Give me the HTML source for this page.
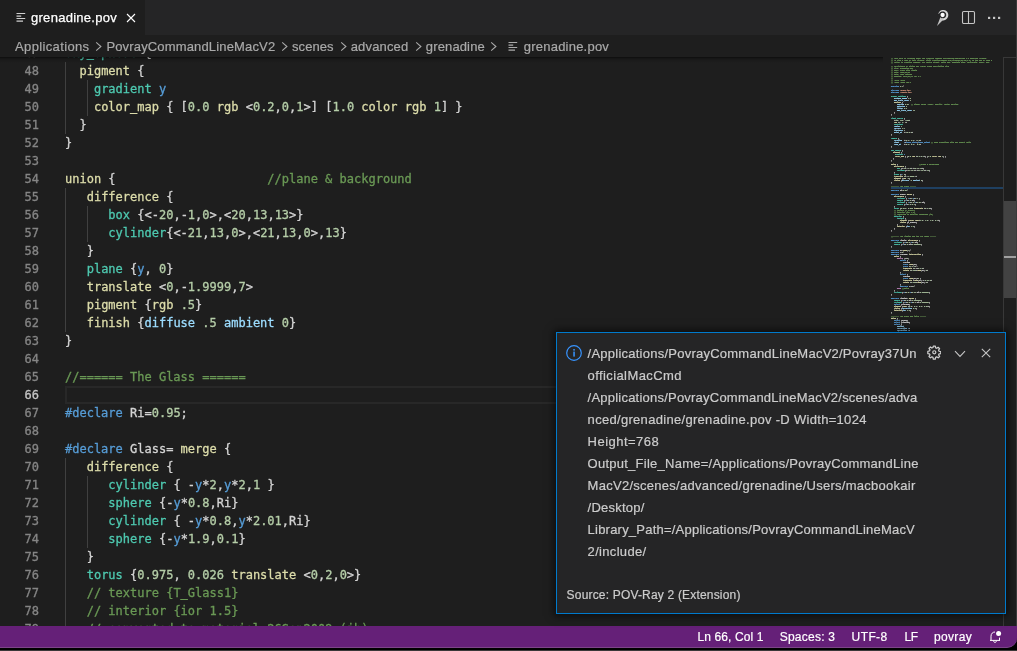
<!DOCTYPE html>
<html lang="en">
<head>
<meta charset="utf-8">
<title>grenadine.pov</title>
<style>
*{box-sizing:border-box;margin:0;padding:0}
html,body{width:1017px;height:651px;overflow:hidden;background:#1e1e1e}
body{position:relative;font-family:"Liberation Sans",sans-serif;font-size:13px;color:#ccc}
.abs{position:absolute}
#root{left:0;top:0;width:1017px;height:651px;overflow:hidden;will-change:transform}
#tabs{left:0;top:0;width:1017px;height:35px;background:#252526}
#tab{left:0;top:0;width:145px;height:35px;background:#1e1e1e}
#tab .lbl{-webkit-text-stroke:.25px;left:31px;top:9px;font-size:13px;line-height:17px;white-space:nowrap;color:#fff;letter-spacing:.28px}
#crumbs{left:0;top:35px;width:1017px;height:22px;background:#1e1e1e;color:#a9a9a9;z-index:5}
#shadow{left:0;top:57px;width:883px;height:6px;z-index:6;background:linear-gradient(rgba(0,0,0,.55),rgba(0,0,0,.28) 1.5px,rgba(0,0,0,.12) 3px,rgba(0,0,0,0) 6px)}
#crumbs span{-webkit-text-stroke:.2px;position:absolute;top:4px;line-height:16px;white-space:nowrap;font-size:13px}
#crumbs svg{position:absolute;top:6px}
#editor{left:0;top:57px;width:1017px;height:569px;overflow:hidden;background:#1e1e1e}
#lines{left:0;top:-13px;width:890px}
.ln{-webkit-text-stroke:.3px;position:absolute;left:0;width:890px;height:18px;line-height:18px;font-family:"DejaVu Sans Mono","Liberation Mono",monospace;font-size:12px;white-space:pre;color:#d4d4d4}
.ln i{position:absolute;left:0;width:39px;text-align:right;color:#858585;font-style:normal}
.ln b{position:absolute;left:65px;font-weight:normal}
.ln.cur i{color:#c6c6c6}
.g{position:absolute;width:1px;background:#404040}
.f{color:#dcdcaa}.t{color:#4ec9b0}.k{color:#569cd6}.v{color:#9cdcfe}.n{color:#b5cea8}.c{color:#6a9955}.s{color:#ce9178}.p{color:#c586c0}
#curline{left:65px;top:342px;width:825px;height:18px;border:2px solid #282828;border-right:0}
#status{left:0;top:626px;width:1017px;height:22px;background:#652078;border-bottom:1px solid #7c4488;color:#fff;font-size:12px;border-bottom-right-radius:10px;z-index:3}
#status span{-webkit-text-stroke:.2px;position:absolute;top:3px;line-height:16px;white-space:nowrap}
#below{left:0;top:640px;width:1017px;height:11px;background:linear-gradient(#000,#000 9.6px,#3a3838 10.2px);z-index:1}
#notif{left:556px;top:332px;width:450px;height:282px;background:#252526;border:1px solid #007acc;box-shadow:0 0 8px 2px rgba(0,0,0,.6);color:#ccc;z-index:10}
#notif .m{-webkit-text-stroke:.2px;position:absolute;left:30.6px;font-size:13px;line-height:22px;white-space:nowrap;color:#ccc}
#notif .src{-webkit-text-stroke:.2px;position:absolute;left:9.6px;top:253px;font-size:12px;line-height:18px;white-space:nowrap;color:#ccc;letter-spacing:.18px}
#mini{left:890px;top:57px;width:113px;height:569px;overflow:hidden}
#mm{opacity:.9;position:absolute;left:1px;top:.6px;-webkit-text-stroke:1.6px;transform-origin:0 0;transform:scale(.13843,.11111);font-family:"DejaVu Sans Mono","Liberation Mono",monospace;font-size:12px;line-height:18px;white-space:pre;color:#d4d4d4;font-weight:bold}
#mmcur{left:891px;top:187px;width:112px;height:2px;background:#1f4061}
#sb{left:1003px;top:57px;width:14px;height:569px;border-left:1px solid #383838;border-top:1px solid #383838}
#edge{left:1016px;top:0;width:1px;height:626px;background:#3a3a3a;z-index:20}
#slider{left:1004px;top:201px;width:13px;height:97px;background:rgba(121,121,121,.4)}
#sbcur{left:1004px;top:256px;width:13px;height:2px;background:#a0a0a0}
</style>
</head>
<body>
<div id="root" class="abs">
<div id="tabs" class="abs">
 <div id="tab" class="abs">
  <svg class="abs" style="left:16px;top:12px" width="10" height="11" viewBox="0 0 10 11"><g stroke="#d0d0d0" stroke-width="1.15" fill="none"><path d="M0.5 1.5H9.2M0.5 4.1H5.2M0.5 6.5H9.2M0.5 9.1H7"/></g></svg>
  <div class="abs lbl">grenadine.pov</div>
  <svg class="abs" style="left:126px;top:13px" width="10" height="10" viewBox="0 0 10 10"><path d="M1 1L9 9M9 1L1 9" stroke="#fff" stroke-width="1.1" fill="none"/></svg>
 </div>
 <!-- POV-Ray icon -->
 <svg class="abs" style="left:935px;top:9px" width="16" height="18" viewBox="0 0 16 18">
  <path d="M3.46 4.81L3.66 4.05L3.99 3.33L4.44 2.67L5.01 2.09L5.68 1.60L6.43 1.23L7.24 1.00L8.09 0.90L8.95 0.96L9.80 1.16L10.60 1.51L11.34 2.00L11.99 2.61L12.52 3.33L12.93 4.13L13.19 5.00L13.29 5.90L13.24 6.80L13.03 7.69L12.67 8.52L12.18 9.29L11.57 9.96L10.86 10.52L10.06 10.95L9.20 11.24L8.30 11.38L7.40 11.38L6.50 11.22L7.05 9.19L7.59 9.29L8.15 9.29L8.69 9.20L9.22 9.02L9.71 8.76L10.14 8.42L10.52 8.01L10.82 7.54L11.03 7.03L11.16 6.49L11.21 5.94L11.16 5.38L11.03 4.84L10.81 4.32L10.51 3.84L10.13 3.41L9.69 3.04L9.18 2.74L8.63 2.52L8.03 2.40L7.42 2.38L6.81 2.45L6.20 2.63L5.62 2.91L5.09 3.29L4.62 3.77L4.23 4.32L3.94 4.94Z" fill="#d6d6d6"/>
  <path d="M2 17L5.4 8.2L8.4 10.4Z" fill="#c4c4c4"/>
  <circle cx="7.6" cy="6" r="2.15" fill="#fff"/>
 </svg>
 <!-- split editor -->
 <svg class="abs" style="left:961px;top:10px" width="15" height="15" viewBox="0 0 15 15"><rect x="1.5" y="1.5" width="12" height="12" rx="1.2" fill="none" stroke="#c5c5c5" stroke-width="1.1"/><path d="M7.5 1.5V13.5" stroke="#c5c5c5" stroke-width="1.1"/></svg>
 <!-- more -->
 <svg class="abs" style="left:987px;top:16px" width="14" height="4" viewBox="0 0 14 4"><g fill="#c5c5c5"><rect x="1" y="0.8" width="2.2" height="2.2"/><rect x="6" y="0.8" width="2.2" height="2.2"/><rect x="11" y="0.8" width="2.2" height="2.2"/></g></svg>
</div>
<div id="crumbs" class="abs">
 <span style="left:15.1px;letter-spacing:.35px">Applications</span>
 <svg style="left:94px" width="9" height="11" viewBox="0 0 9 11"><path d="M2.2 1.4L6.9 5.5L2.2 9.6" fill="none" stroke="#a9a9a9" stroke-width="1.1"/></svg>
 <span style="left:106.4px;letter-spacing:.155px">PovrayCommandLineMacV2</span>
 <svg style="left:280px" width="9" height="11" viewBox="0 0 9 11"><path d="M2.2 1.4L6.9 5.5L2.2 9.6" fill="none" stroke="#a9a9a9" stroke-width="1.1"/></svg>
 <span style="left:292px;letter-spacing:.08px">scenes</span>
 <svg style="left:339px" width="9" height="11" viewBox="0 0 9 11"><path d="M2.2 1.4L6.9 5.5L2.2 9.6" fill="none" stroke="#a9a9a9" stroke-width="1.1"/></svg>
 <span style="left:350.7px;letter-spacing:.16px">advanced</span>
 <svg style="left:414px" width="9" height="11" viewBox="0 0 9 11"><path d="M2.2 1.4L6.9 5.5L2.2 9.6" fill="none" stroke="#a9a9a9" stroke-width="1.1"/></svg>
 <span style="left:425.8px;letter-spacing:.14px">grenadine</span>
 <svg style="left:489px" width="9" height="11" viewBox="0 0 9 11"><path d="M2.2 1.4L6.9 5.5L2.2 9.6" fill="none" stroke="#a9a9a9" stroke-width="1.1"/></svg>
 <svg style="left:508px;top:6px" width="10" height="11" viewBox="0 0 10 11"><g stroke="#a9a9a9" stroke-width="1.2" fill="none"><path d="M0.5 1.5H9.2M0.5 4.1H5.2M0.5 6.5H9.2M0.5 9.1H7"/></g></svg>
 <span style="left:523.8px;letter-spacing:.22px">grenadine.pov</span>
</div>
<div id="shadow" class="abs"></div>
<div id="editor" class="abs">
<div id="lines" class="abs">
<div id="curline" class="abs"></div>
<div class="ln" style="top:0px"><i>47</i><b><span class="t">sky_sphere</span> {</b></div>
<div class="ln" style="top:18px"><i>48</i><b>  <span class="f">pigment</span> {</b></div>
<div class="ln" style="top:36px"><i>49</i><b>    <span class="t">gradient</span> <span class="k">y</span></b></div>
<div class="ln" style="top:54px"><i>50</i><b>    <span class="f">color_map</span> { [<span class="n">0.0</span> <span class="f">rgb</span> &lt;<span class="n">0.2</span>,<span class="n">0</span>,<span class="n">1</span>&gt;] [<span class="n">1.0</span> <span class="f">color</span> <span class="f">rgb</span> <span class="n">1</span>] }</b></div>
<div class="ln" style="top:72px"><i>51</i><b>  }</b></div>
<div class="ln" style="top:90px"><i>52</i><b>}</b></div>
<div class="ln" style="top:108px"><i>53</i><b></b></div>
<div class="ln" style="top:126px"><i>54</i><b><span class="f">union</span> {                     <span class="c">//plane &amp; background</span></b></div>
<div class="ln" style="top:144px"><i>55</i><b>   <span class="f">difference</span> {</b></div>
<div class="ln" style="top:162px"><i>56</i><b>      <span class="t">box</span> {&lt;-<span class="n">20</span>,-<span class="n">1</span>,<span class="n">0</span>&gt;,&lt;<span class="n">20</span>,<span class="n">13</span>,<span class="n">13</span>&gt;}</b></div>
<div class="ln" style="top:180px"><i>57</i><b>      <span class="t">cylinder</span>{&lt;-<span class="n">21</span>,<span class="n">13</span>,<span class="n">0</span>&gt;,&lt;<span class="n">21</span>,<span class="n">13</span>,<span class="n">0</span>&gt;,<span class="n">13</span>}</b></div>
<div class="ln" style="top:198px"><i>58</i><b>   }</b></div>
<div class="ln" style="top:216px"><i>59</i><b>   <span class="t">plane</span> {<span class="k">y</span>, <span class="n">0</span>}</b></div>
<div class="ln" style="top:234px"><i>60</i><b>   <span class="f">translate</span> &lt;<span class="n">0</span>,-<span class="n">1.9999</span>,<span class="n">7</span>&gt;</b></div>
<div class="ln" style="top:252px"><i>61</i><b>   <span class="f">pigment</span> {<span class="f">rgb</span> <span class="n">.5</span>}</b></div>
<div class="ln" style="top:270px"><i>62</i><b>   <span class="f">finish</span> {<span class="v">diffuse</span> <span class="n">.5</span> <span class="v">ambient</span> <span class="n">0</span>}</b></div>
<div class="ln" style="top:288px"><i>63</i><b>}</b></div>
<div class="ln" style="top:306px"><i>64</i><b></b></div>
<div class="ln" style="top:324px"><i>65</i><b><span class="c">//====== The Glass ======</span></b></div>
<div class="ln cur" style="top:342px"><i>66</i><b></b></div>
<div class="ln" style="top:360px"><i>67</i><b><span class="k">#declare</span> Ri=<span class="n">0.95</span>;</b></div>
<div class="ln" style="top:378px"><i>68</i><b></b></div>
<div class="ln" style="top:396px"><i>69</i><b><span class="k">#declare</span> Glass= <span class="f">merge</span> {</b></div>
<div class="ln" style="top:414px"><i>70</i><b>   <span class="f">difference</span> {</b></div>
<div class="ln" style="top:432px"><i>71</i><b>      <span class="t">cylinder</span> { -<span class="k">y</span>*<span class="n">2</span>,<span class="k">y</span>*<span class="n">2</span>,<span class="n">1</span> }</b></div>
<div class="ln" style="top:450px"><i>72</i><b>      <span class="t">sphere</span> {-<span class="k">y</span>*<span class="n">0.8</span>,Ri}</b></div>
<div class="ln" style="top:468px"><i>73</i><b>      <span class="t">cylinder</span> { -<span class="k">y</span>*<span class="n">0.8</span>,<span class="k">y</span>*<span class="n">2.01</span>,Ri}</b></div>
<div class="ln" style="top:486px"><i>74</i><b>      <span class="t">sphere</span> {-<span class="k">y</span>*<span class="n">1.9</span>,<span class="n">0.1</span>}</b></div>
<div class="ln" style="top:504px"><i>75</i><b>   }</b></div>
<div class="ln" style="top:522px"><i>76</i><b>   <span class="t">torus</span> {<span class="n">0.975</span>, <span class="n">0.026</span> <span class="f">translate</span> &lt;<span class="n">0</span>,<span class="n">2</span>,<span class="n">0</span>&gt;}</b></div>
<div class="ln" style="top:540px"><i>77</i><b>   <span class="c">// texture {T_Glass1}</span></b></div>
<div class="ln" style="top:558px"><i>78</i><b>   <span class="c">// interior {ior 1.5}</span></b></div>
<div class="ln" style="top:576px"><i>79</i><b>   <span class="c">// converted to material 26Sep2008 (jh)</span></b></div>
<div class="g" style="left:65.00px;top:18px;height:72px"></div>
<div class="g" style="left:86.67px;top:36px;height:36px"></div>
<div class="g" style="left:65.00px;top:144px;height:144px"></div>
<div class="g" style="left:86.67px;top:162px;height:36px"></div>
<div class="g" style="left:65.00px;top:414px;height:180px"></div>
<div class="g" style="left:86.67px;top:432px;height:72px"></div>
</div>
</div>
<div id="mini" class="abs"><div id="mm"><span class="c">// This work is licensed under the Creative Commons Attribution-ShareAlike 3.0 Unported License.</span>
<span class="c">// To view a copy of this license, visit creativecommons.org/licenses/by-sa/3.0/ on the web or send a</span>
<span class="c">// letter to Creative Commons, 444 Castro Street, Suite 900, Mountain View, California, 94041, USA.</span>

<span class="c">// Persistence Of Vision Ray Tracer Scene Description File</span>
<span class="c">// File: grenadine.pov</span>
<span class="c">// Desc: Glass with liquid</span>
<span class="c">// Date: 1999/06/04</span>
<span class="c">// Auth: Ingo Janssen</span>
<span class="c">// Updated: 2013/02/15 for 3.7</span>
<span class="c">//</span>
<span class="c">// -w320 -h240</span>
<span class="c">// -w800 -h600 +a0.3</span>

<span class="k">#version</span> <span class="n">3.7</span>;

<span class="k">#include</span> <span class="s">"glass.inc"</span>
<span class="k">#include</span> <span class="s">"consts.inc"</span>

<span class="t">global_settings</span> {
   <span class="v">assumed_gamma</span> <span class="n">1.0</span>
   <span class="v">max_trace_level</span> <span class="n">5</span>
   <span class="f">photons</span> {
      <span class="v">spacing</span> <span class="n">0.01</span>  <span class="c">// higher value 'lower' quality, faster parsing.</span>
      <span class="v">autostop</span> <span class="n">0</span>
      <span class="v">jitter</span> <span class="n">0.5</span>
      <span class="v">max_trace_level</span> <span class="n">15</span>
   }
}

<span class="t">light_source</span> {
   &lt;<span class="n">500</span>, <span class="n">550</span>, -<span class="n">100</span>&gt;
   <span class="f">rgb</span> &lt;<span class="n">1</span>, <span class="n">1</span>, <span class="n">1</span>&gt;
   <span class="t">spotlight</span>
   <span class="v">radius</span> <span class="n">1</span>
   <span class="v">falloff</span> <span class="n">1.1</span>
   <span class="v">tightness</span> <span class="n">1</span>
   <span class="v">point_at</span>  &lt;-<span class="n">19</span>,<span class="n">0</span>,<span class="n">0</span>&gt;
}

<span class="t">camera</span> {
   <span class="v">location</span>  &lt;-<span class="n">0.5</span>, <span class="n">2.5</span>, -<span class="n">7.0</span>&gt;
   <span class="v">right</span>     <span class="k">x</span>*<span class="k">image_width</span>/<span class="k">image_height</span> <span class="c">// keep propotions with any aspect ratio</span>
   <span class="v">look_at</span>   &lt;-<span class="n">0.5</span>, <span class="n">0.5</span>,  <span class="n">0.0</span>&gt;
}

<span class="t">sky_sphere</span> {
  <span class="f">pigment</span> {
    <span class="t">gradient</span> <span class="k">y</span>
    <span class="f">color_map</span> { [<span class="n">0.0</span> <span class="f">rgb</span> &lt;<span class="n">0.2</span>,<span class="n">0</span>,<span class="n">1</span>&gt;] [<span class="n">1.0</span> <span class="f">color</span> <span class="f">rgb</span> <span class="n">1</span>] }
  }
}

<span class="f">union</span> {                     <span class="c">//plane &amp; background</span>
   <span class="f">difference</span> {
      <span class="t">box</span> {&lt;-<span class="n">20</span>,-<span class="n">1</span>,<span class="n">0</span>&gt;,&lt;<span class="n">20</span>,<span class="n">13</span>,<span class="n">13</span>&gt;}
      <span class="t">cylinder</span>{&lt;-<span class="n">21</span>,<span class="n">13</span>,<span class="n">0</span>&gt;,&lt;<span class="n">21</span>,<span class="n">13</span>,<span class="n">0</span>&gt;,<span class="n">13</span>}
   }
   <span class="t">plane</span> {<span class="k">y</span>, <span class="n">0</span>}
   <span class="f">translate</span> &lt;<span class="n">0</span>,-<span class="n">1.9999</span>,<span class="n">7</span>&gt;
   <span class="f">pigment</span> {<span class="f">rgb</span> <span class="n">.5</span>}
   <span class="f">finish</span> {<span class="v">diffuse</span> <span class="n">.5</span> <span class="v">ambient</span> <span class="n">0</span>}
}

<span class="c">//====== The Glass ======</span>

<span class="k">#declare</span> Ri=<span class="n">0.95</span>;

<span class="k">#declare</span> Glass= <span class="f">merge</span> {
   <span class="f">difference</span> {
      <span class="t">cylinder</span> { -<span class="k">y</span>*<span class="n">2</span>,<span class="k">y</span>*<span class="n">2</span>,<span class="n">1</span> }
      <span class="t">sphere</span> {-<span class="k">y</span>*<span class="n">0.8</span>,Ri}
      <span class="t">cylinder</span> { -<span class="k">y</span>*<span class="n">0.8</span>,<span class="k">y</span>*<span class="n">2.01</span>,Ri}
      <span class="t">sphere</span> {-<span class="k">y</span>*<span class="n">1.9</span>,<span class="n">0.1</span>}
   }
   <span class="t">torus</span> {<span class="n">0.975</span>, <span class="n">0.026</span> <span class="f">translate</span> &lt;<span class="n">0</span>,<span class="n">2</span>,<span class="n">0</span>&gt;}
   <span class="c">// texture {T_Glass1}</span>
   <span class="c">// interior {ior 1.5}</span>
   <span class="c">// converted to material 26Sep2008 (jh)</span>
   <span class="t">material</span> {
      <span class="t">texture</span> {
         <span class="f">pigment</span> {<span class="f">color</span> <span class="f">rgbf</span>&lt;<span class="n">1.0</span>, <span class="n">1.0</span>, <span class="n">1.0</span>, <span class="n">0.7</span>&gt;}
         <span class="f">finish</span> {F_Glass1}
      }
      <span class="f">interior</span> {<span class="v">ior</span> <span class="n">1.5</span>}
   }
}


<span class="c">//====== The Liquids and the Ice cubes ======</span>

<span class="k">#declare</span> Liquid= <span class="f">difference</span> {
   <span class="t">cylinder</span> {-<span class="k">y</span>*<span class="n">0.8</span>,<span class="k">y</span>*<span class="n">1</span>,Ri}
   <span class="t">sphere</span> {-<span class="k">y</span>*<span class="n">0.8</span>,Ri+<span class="n">0.0000001</span>}
}

<span class="k">#declare</span> R1=<span class="f">seed</span>(<span class="n">7</span>);
<span class="k">#declare</span> I=<span class="n">0</span>;
<span class="k">#declare</span> Icecube= <span class="f">intersection</span> {
   <span class="f">union</span> {
      <span class="p">#while</span> (I&lt;<span class="n">8</span>)
         <span class="k">object</span> {
            Icecube
            <span class="k">scale</span> <span class="f">rand</span>(R1)
            <span class="k">scale</span> &lt;<span class="n">1</span>,<span class="n">1</span>,<span class="n">1</span>&gt;..
            <span class="f">translate</span> &lt;<span class="n">0</span>,I*<span class="n">0.2</span>,<span class="n">0</span>&gt;
            <span class="f">rotate</span> &lt;<span class="n">0</span>,<span class="n">360</span>*<span class="f">rand</span>(R1),<span class="n">0</span>&gt;
         }
         <span class="k">object</span> {
            Icecube
            <span class="k">scale</span> <span class="f">rand</span>(R1)*<span class="n">3</span> }
            <span class="f">translate</span> &lt;<span class="f">rand</span>(R1),I,<span class="n">0.25</span>,<span class="n">0</span>&gt;
            <span class="f">rotate</span> &lt;<span class="n">0</span>,<span class="n">360</span>*<span class="f">rand</span>(R1),<span class="n">0</span>&gt;
         }
         <span class="k">#declare</span> I=I+<span class="n">1</span>;
      <span class="p">#end</span> <span class="c">//while</span>
   }
   <span class="t">cylinder</span>{-<span class="k">y</span>*<span class="n">0.8</span>,<span class="k">y</span>*<span class="n">0.25</span>,Ri-<span class="n">0.0000001</span>}
}

<span class="k">#declare</span> LiquidA= <span class="f">merge</span> {
   <span class="t">sphere</span> {-<span class="k">y</span>*<span class="n">0.8</span>,Ri-<span class="n">0.0000001</span>}
   <span class="t">cylinder</span> {-<span class="k">y</span>*<span class="n">0.8</span>,<span class="k">y</span>*<span class="n">0.5</span>,Ri-<span class="n">0.0000001</span>}
   <span class="k">object</span> {Icecube}
   <span class="f">pigment</span> {<span class="f">rgbf</span> &lt;<span class="n">0.9</span>, <span class="n">0.1</span>, <span class="n">0.2</span>, <span class="n">0.95</span>&gt;}
   <span class="f">finish</span> {<span class="v">reflection</span> <span class="n">0.3</span>}
   <span class="f">interior</span>{<span class="v">ior</span> <span class="n">1.2</span>}
}

<span class="c">//====== The glass and juice ======</span>
<span class="f">union</span> {
   <span class="k">object</span> {Glass}
   <span class="k">object</span> {LiquidA}
   <span class="k">object</span> {
      <span class="v">ambient</span>
      <span class="v">reflection</span> <span class="k">y</span>*
      <span class="v">refraction</span> <span class="k">y</span>*
      <span class="v">diffuse</span> <span class="n">.5</span></div></div>
<div id="mmcur" class="abs"></div>
<div id="sb" class="abs"></div>
<div id="edge" class="abs"></div>
<div id="slider" class="abs"></div>
<div id="sbcur" class="abs"></div>
<div id="notif" class="abs">
 <svg class="abs" style="left:8px;top:11px" width="18" height="18" viewBox="0 0 18 18"><circle cx="9" cy="9" r="7.3" fill="none" stroke="#3794ff" stroke-width="1.2"/><rect x="8.3" y="7.6" width="1.5" height="5" fill="#3794ff"/><rect x="8.3" y="5" width="1.5" height="1.6" fill="#3794ff"/></svg>
 <div class="m" style="top:10px;letter-spacing:0.24px">/Applications/PovrayCommandLineMacV2/Povray37Un</div>
 <div class="m" style="top:32px;letter-spacing:0.4px">officialMacCmd</div>
 <div class="m" style="top:54px;letter-spacing:.22px">/Applications/PovrayCommandLineMacV2/scenes/adva</div>
 <div class="m" style="top:76px;letter-spacing:0.305px">nced/grenadine/grenadine.pov -D Width=1024</div>
 <div class="m" style="top:98px;letter-spacing:0.47px">Height=768</div>
 <div class="m" style="top:120px;letter-spacing:0.25px">Output_File_Name=/Applications/PovrayCommandLine</div>
 <div class="m" style="top:142px;letter-spacing:0.27px">MacV2/scenes/advanced/grenadine/Users/macbookair</div>
 <div class="m" style="top:164px;letter-spacing:.22px">/Desktop/</div>
 <div class="m" style="top:186px;letter-spacing:.22px">Library_Path=/Applications/PovrayCommandLineMacV</div>
 <div class="m" style="top:208px;letter-spacing:0.32px">2/include/</div>
 <div class="src">Source: POV-Ray 2 (Extension)</div>
 <!-- gear -->
 <svg class="abs" style="left:369.6px;top:12.4px" width="14.6" height="14.6" viewBox="0 0 16 16"><g fill="none" stroke="#cfcfcf" stroke-width="1.35"><circle cx="8" cy="8" r="1.7"/><path d="M6.9 1.2h2.2l.35 1.9 1.2.5 1.6-1.1 1.55 1.55-1.1 1.6.5 1.2 1.9.35v2.2l-1.9.35-.5 1.2 1.1 1.6-1.55 1.55-1.6-1.1-1.2.5-.35 1.9H6.9l-.35-1.9-1.2-.5-1.6 1.1-1.55-1.55 1.1-1.6-.5-1.2-1.9-.35V6.9l1.9-.35.5-1.2-1.1-1.6L3.75 2.2l1.6 1.1 1.2-.5z" stroke-linejoin="round"/></g></svg>
 <!-- chevron down -->
 <svg class="abs" style="left:397px;top:16.6px" width="12" height="8" viewBox="0 0 12 8"><path d="M1 1.2L6 6.4L11 1.2" fill="none" stroke="#c5c5c5" stroke-width="1.1"/></svg>
 <!-- close -->
 <svg class="abs" style="left:424px;top:15px" width="10" height="10" viewBox="0 0 10 10"><path d="M0.8 0.8L9.2 9.2M9.2 0.8L0.8 9.2" stroke="#c5c5c5" stroke-width="1.1" fill="none"/></svg>
</div>
<div id="status" class="abs">
 <span style="left:697.5px;letter-spacing:.1px">Ln 66, Col 1</span>
 <span style="left:779.7px;letter-spacing:.24px">Spaces: 3</span>
 <span style="left:851.6px;letter-spacing:.4px">UTF-8</span>
 <span style="left:904.6px;letter-spacing:-.4px">LF</span>
 <span style="left:933.9px;letter-spacing:.35px">povray</span>
 <svg class="abs" style="left:988px;top:4px" width="14" height="14" viewBox="0 0 14 14"><path d="M2 10.4h10M3 10.4V6.2C3 3.6 4.8 2 7 2M11.5 7.6v2.8M5.6 10.8c0 1 .6 1.6 1.4 1.6s1.4-.6 1.4-1.6" fill="none" stroke="#fff" stroke-width="1"/><circle cx="10.6" cy="3.5" r="2.5" fill="#fff"/></svg>
</div>
<div id="below" class="abs"></div>
</div>
</body>
</html>
